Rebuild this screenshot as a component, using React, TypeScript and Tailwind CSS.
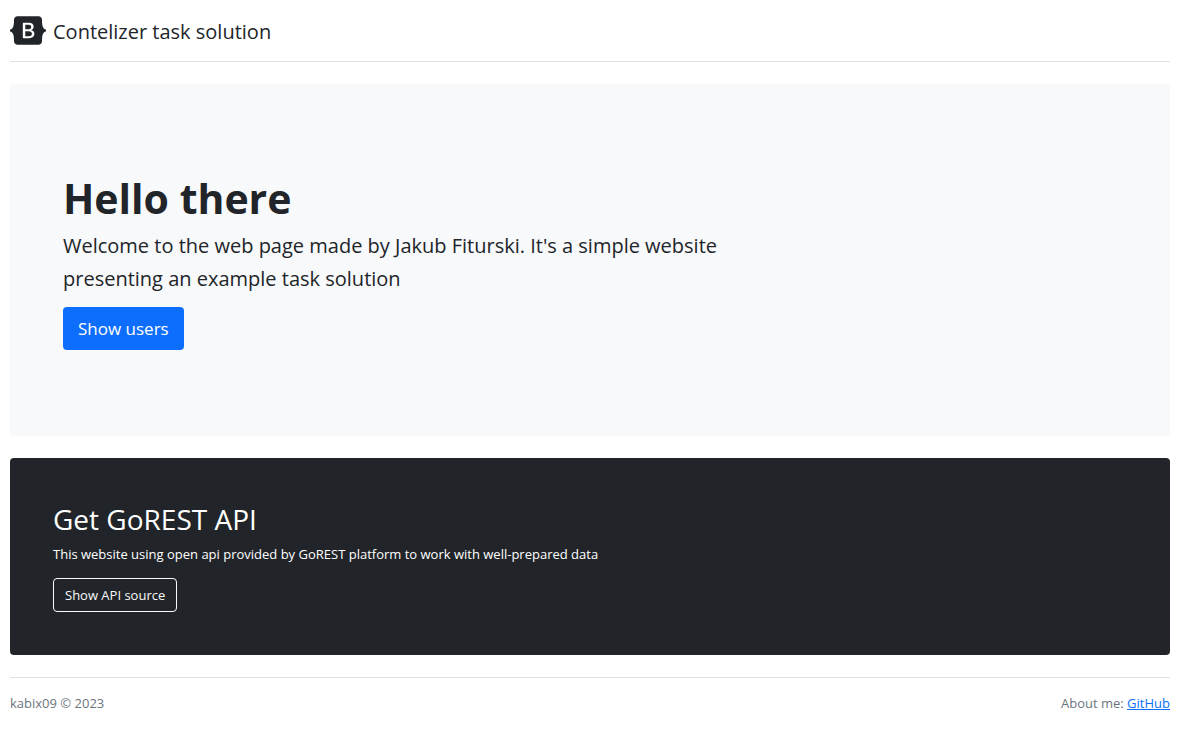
export default function App() {
  return (
    <main className="bg-white py-[14px] pr-6 pl-[10px] font-['Open_Sans','Noto_Sans',sans-serif] text-[#212529]">
      <header className="mb-[22px] border-b border-[#dee2e6] pb-[11px]">
        <a href="/" className="flex items-start gap-[7px] text-[#212529]">
          <svg viewBox="0 0 118 94" className="mt-[2px] h-[29px] w-9 shrink-0" role="img" aria-label="Bootstrap">
            <path fill="currentColor" fillRule="evenodd" clipRule="evenodd" d="M24.509 0c-6.733 0-11.715 5.893-11.492 12.284.214 6.14-.064 14.092-2.066 20.577C8.943 39.365 5.547 43.485 0 44.014v5.972c5.547.529 8.943 4.649 10.951 11.153 2.002 6.485 2.28 14.437 2.066 20.577C12.794 88.106 17.776 94 24.51 94H93.5c6.733 0 11.714-5.893 11.491-12.284-.214-6.14.064-14.092 2.066-20.577 2.009-6.504 5.396-10.624 10.943-11.153v-5.972c-5.547-.529-8.934-4.649-10.943-11.153-2.002-6.484-2.28-14.437-2.066-20.577C105.214 5.894 100.233 0 93.5 0H24.508zM80 57.863C80 66.663 73.436 72 62.543 72H44a2 2 0 01-2-2V24a2 2 0 012-2h18.437c9.083 0 15.044 4.92 15.044 12.474 0 5.302-4.01 10.049-9.119 10.88v.277C75.317 46.394 80 51.21 80 57.863zM60.521 28.34H49.948v14.934h8.905c6.884 0 10.68-2.772 10.68-7.727 0-4.643-3.264-7.207-9.012-7.207zM49.948 49.2v16.458H60.91c7.167 0 10.964-2.876 10.964-8.281 0-5.406-3.903-8.178-11.425-8.178H49.948z" />
          </svg>
          <span className="text-xl leading-9">Contelizer task solution</span>
        </a>
      </header>

      <section className="mb-[22px] rounded bg-[#f8f9fa] px-[53px] pt-[88px] pb-[86px]">
        <h1 className="mb-[5px] text-[41px] leading-[52px] font-bold">Hello there</h1>
        <p className="mb-3 max-w-[703px] text-xl leading-[33px]">
          Welcome to the web page made by Jakub Fiturski. It's a simple website presenting an example task solution
        </p>
        <button type="button" className="h-[43px] rounded bg-[#0d6efd] px-[15px] pt-px text-[17px] text-white">
          Show users
        </button>
      </section>

      <section className="mb-[22px] rounded bg-[#212529] px-[43px] pt-11 pb-[43px] text-white">
        <h2 className="mb-[7px] text-[28px] leading-[34px]">Get GoREST API</h2>
        <p className="mb-[13px] text-[13px] leading-[22px]">
          This website using open api provided by GoREST platform to work with well-prepared data
        </p>
        <button type="button" className="h-[34px] rounded-sm border border-[#f8f9fa] px-[11px] pt-[2px] text-[13px] text-[#f8f9fa]">
          Show API source
        </button>
      </section>

      <footer className="flex justify-between border-t border-[#dee2e6] pt-[14px] text-[13px] leading-[22px] text-[#6c757d]">
        <span>kabix09 © 2023</span>
        <span>
          About me: <a href="https://github.com/kabix09" className="text-[#0d6efd] underline">GitHub</a>
        </span>
      </footer>
    </main>
  );
}
